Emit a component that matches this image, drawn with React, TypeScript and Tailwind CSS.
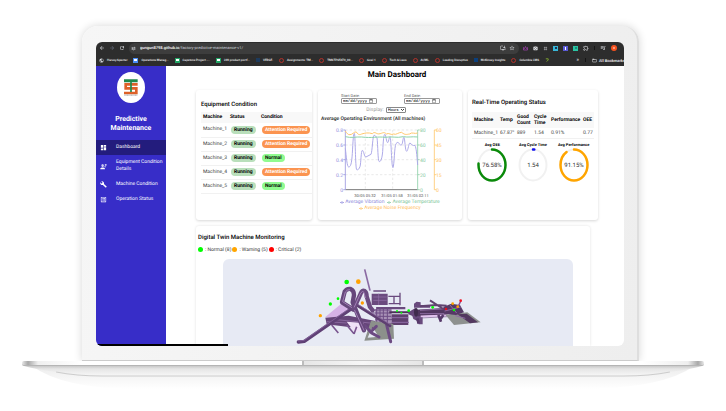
import type { ReactNode } from "react";
import {
  MdBuild,
  MdDashboard,
  MdEngineering,
  MdListAlt,
  MdArrowBack,
  MdArrowForward,
  MdRefresh,
  MdTune,
  MdStarBorder,
  MdInstallDesktop,
  MdPhotoCamera,
  MdTag,
  MdOutlineExtension,
  MdQueueMusic,
  MdMoreVert,
  MdPublic,
  MdFolderOpen,
} from "react-icons/md";

const bookmarks: { label: string; icon: ReactNode }[] = [
  { label: "Harvey Specter", icon: <MdPublic className="size-[5px] text-gray-200" /> },
  { label: "Operations Manag...", icon: <Square className="bg-[#4a8cf5]" /> },
  { label: "Capstone Project -...", icon: <Square className="bg-[#22a565]" /> },
  { label: "249 product portf...", icon: <Square className="bg-[#22a565]" /> },
  { label: "VERGE.", icon: <span className="size-1 bg-[#1d3a5c]" /> },
  { label: "Assignments: TM...", icon: <Ring /> },
  { label: "TMSTPS5470_00...", icon: <Ring /> },
  { label: "Goal 1", icon: <Ring /> },
  { label: "Tech & Laws", icon: <Ring /> },
  { label: "AI/ML", icon: <Ring /> },
  { label: "Leading Disruptive", icon: <Ring /> },
  { label: "McKinsey Insights", icon: <span className="size-1 bg-[#0b3f7c]" /> },
  { label: "Columbia LMS", icon: <Ring /> },
];

function Square({ className }: { className: string }) {
  return (
    <span className={`flex size-[5px] items-center justify-center ${className}`}>
      <span className="h-[2px] w-[3px] bg-white" />
    </span>
  );
}

function Ring() {
  return <span className="size-[5px] rounded-full border border-[#b3322b]" />;
}

function BrowserBar() {
  return (
    <header className="overflow-hidden bg-[#2d2d2d] text-gray-200">
      <div className="flex h-3 items-center gap-1">
        <nav className="flex shrink-0 items-center gap-1 pl-[3px]">
          <button aria-label="Back"><MdArrowBack className="size-[6px]" /></button>
          <button aria-label="Forward" className="text-gray-500"><MdArrowForward className="size-[6px]" /></button>
          <button aria-label="Reload"><MdRefresh className="size-[6px]" /></button>
        </nav>
        <div className="flex h-[11px] min-w-0 flex-1 items-center rounded-full bg-[#3d3d3d] pr-1 pl-[2px]">
          <MdTune className="mr-1 size-[5px] shrink-0" />
          <p className="flex-1 truncate text-[4px] leading-[6px] font-medium text-white">
            gungun8798.github.io<span className="font-normal text-gray-300">/factory-predictive-maintenance-v1/</span>
          </p>
          <button aria-label="Install" className="mr-[3px]"><MdInstallDesktop className="size-[6px]" /></button>
          <button aria-label="Bookmark"><MdStarBorder className="size-[6px]" /></button>
        </div>
        <div className="flex shrink-0 items-center gap-[5px]">
          <svg viewBox="0 0 10 10" className="size-[5px]" fill="none" stroke="#9b3fa8" strokeWidth="1.6">
            <path d="M1 8V3l2 2 2-4 2 4 2-2v5z" />
          </svg>
          <MdPhotoCamera className="size-[5px]" />
          <MdTag className="size-[5px]" />
          <span className="flex size-[5px] items-center justify-center bg-[#39b7d8]"><span className="size-[2px] bg-[#1c3550]" /></span>
          <span className="flex size-[5px] items-center justify-center bg-[#5b5bd6]"><span className="h-[3px] w-px bg-white" /></span>
          <span className="flex size-[5px] items-center justify-center bg-[#2bc4a4]"><span className="size-[2px] bg-[#178f77]" /></span>
          <MdOutlineExtension className="size-[6px]" />
          <span className="h-1 w-px bg-[#151515]" />
          <MdQueueMusic className="size-[6px]" />
          <span className="flex size-[6px] items-center justify-center rounded-full bg-[#f4511e]"><span className="size-[2px] rounded-full bg-[#ffb199]" /></span>
          <MdMoreVert className="-mr-1 size-[6px]" />
        </div>
      </div>
      <nav className="flex h-3 items-center gap-[6px] pl-[3px] text-[3px] leading-[5px] font-medium whitespace-nowrap text-gray-100">
        {bookmarks.map((b) => (
          <a key={b.label} href="#" className="flex shrink-0 items-center gap-[3px]">
            {b.icon}
            {b.label}
          </a>
        ))}
        <svg viewBox="0 0 10 10" className="size-1 shrink-0" fill="none" stroke="#8bb92f" strokeWidth="2">
          <path d="M2 2h6v3L4 9" />
        </svg>
        <span className="ml-auto text-[5px]">»</span>
        <span className="h-1 w-px shrink-0 bg-[#151515]" />
        <a href="#" className="-mr-px flex shrink-0 items-center gap-[2px]">
          <MdFolderOpen className="size-[5px]" />
          <span className="text-[4px]">All Bookmarks</span>
        </a>
      </nav>
    </header>
  );
}

const menu = [
  { label: "Dashboard", Icon: MdDashboard, active: true },
  { label: "Equipment Condition Details", Icon: MdEngineering, active: false },
  { label: "Machine Condition", Icon: MdBuild, active: false },
  { label: "Operation Status", Icon: MdListAlt, active: false },
];

function Sidebar() {
  return (
    <aside className="w-[70px] shrink-0 bg-[#372dc8] pt-[6px] text-white">
      <svg viewBox="0 0 84 93" className="mx-auto h-[31px] w-7" aria-label="TS logo">
        <ellipse cx="42" cy="46.500" rx="42" ry="46.500" fill="#fff" />
        <g fill="none" strokeWidth="8">
          <path d="M62 37H26v12h32v14H21" stroke="#dd6128" />
          <path d="M21 26h41" stroke="#1f8a4c" strokeWidth="9" />
          <path d="M42 30v30" stroke="#1f8a4c" strokeWidth="5" />
        </g>
        <path d="M22 69.500h40" stroke="#777" strokeWidth="2" strokeDasharray="3 1" />
      </svg>
      <h1 className="mt-3 text-center text-[7px] leading-[9px] font-bold">
        Predictive
        <br />
        Maintenance
      </h1>
      <nav className="mt-[7px] flex flex-col text-[5px] leading-[7px]">
        {menu.map(({ label, Icon, active }) => (
          <a
            key={label}
            href="#"
            className={`flex items-center gap-[9px] py-1 pl-1 ${active ? "bg-[#231c7d]" : ""}`}
          >
            <Icon className="size-[7px] shrink-0" />
            <span>{label}</span>
          </a>
        ))}
      </nav>
    </aside>
  );
}

const card = "rounded-[3px] bg-white shadow-[0_1px_3px_rgba(0,0,0,0.16)]";

const machines = [
  { name: "Machine_1", ok: false },
  { name: "Machine_2", ok: false },
  { name: "Machine_3", ok: true },
  { name: "Machine_4", ok: false },
  { name: "Machine_5", ok: true },
];

function EquipmentCondition() {
  return (
    <section className={`${card} pt-[11px] pb-[26px] pl-[5px]`}>
      <h3 className="mb-[3px] text-[6px] leading-2 font-medium">Equipment Condition</h3>
      <table className="w-full table-fixed text-left text-[5px] leading-[7px]">
        <thead>
          <tr className="h-[11px] bg-[#f8f8f8]">
            <th className="w-[27px] pl-[2px] font-bold">Machine</th>
            <th className="w-[30px] pl-[2px] font-bold">Status</th>
            <th className="pl-[3px] font-bold">Condition</th>
          </tr>
        </thead>
        <tbody>
          {machines.map((m) => (
            <tr key={m.name} className="h-[14px] border-b border-[#f1f1f1]">
              <td className="pl-[2px] text-[#444]">{m.name}</td>
              <td className="pl-[3px]">
                <span className="inline-block rounded-full bg-[#b9dfbb] px-[3px] leading-2 font-bold">Running</span>
              </td>
              <td className="pl-1">
                <span
                  className={`inline-block rounded-full px-[3px] leading-2 font-bold ${m.ok ? "bg-[#90fb90] text-black" : "bg-[#fb9450] text-white"}`}
                >
                  {m.ok ? "Normal" : "Attention Required"}
                </span>
              </td>
            </tr>
          ))}
        </tbody>
      </table>
    </section>
  );
}

const leftTicks = ["0.8", "0.6", "0.4", "0.2", "0"];
const midTicks = ["80", "60", "40", "20", "0"];
const rightTicks = ["60", "45", "30", "15", "0"];

function EnvironmentChart() {
  return (
    <svg viewBox="0 0 144 70" className="w-full text-[5px]" aria-label="Average operating environment">
      <g transform="scale(0.33333) translate(-9 -126)" fill="none">
        <g stroke="#dedede" strokeDasharray="7 6" strokeWidth="2">
          <path d="M91 135H308M91 180H308M91 224H308M91 269H308M151 135V314M233 135V314" />
        </g>
        <path d="M91 314H308" stroke="#777" strokeWidth="3" />
        <path d="M85 135h6M85 180h6M85 224h6M85 269h6M85 314h6M91 135V314" stroke="#9b97e0" strokeWidth="2.500" />
        <path d="M308 135V314M308 135h6M308 180h6M308 224h6M308 269h6M308 314h6" stroke="#8dcfa7" strokeWidth="2.500" />
        <path d="M358 135V314M358 135h6M358 180h6M358 224h6M358 269h6M358 314h6" stroke="#ffc870" strokeWidth="2.500" />
        <path
          d="M91 190C94 215 96 246 101 246C107 246 110 236 112 205C114 170 115 145 118 145C121 145 121 252 125 254C129 256 132 252 135 245C138 235 138 197 142 196C146 196 148 217 153 216C158 213 163 211 168 208C172 200 173 152 177 151C181 150 183 156 186 158C189 180 188 229 193 230C198 230 201 220 203 200C205 165 206 148 210 148C213 150 214 172 218 173C221 173 222 155 225 155C229 160 229 247 234 248C238 240 238 185 243 176C248 170 250 172 252 175C255 180 258 182 261 178C264 170 264 157 267 157C270 160 270 198 275 199C280 196 281 173 285 174C290 178 294 184 300 181C304 190 305 205 308 240"
          stroke="#aeaae8"
          strokeWidth="3"
        />
        <path d="M91 155C110 160 120 155 140 156C170 160 190 154 210 157C230 153 245 160 265 155C280 158 290 154 308 156" stroke="#8dd2a9" strokeWidth="3" />
        <path
          d="M91 138C96 145 99 150 105 149C112 150 118 138 124 141C130 150 133 150 140 147C150 144 160 142 172 146C180 137 185 150 195 146C202 145 207 139 214 147C222 142 228 152 236 147C243 151 250 142 260 142C270 151 275 148 284 147C290 140 300 148 308 144"
          stroke="#ffc76b"
          strokeWidth="3"
        />
      </g>
      {leftTicks.map((t, i) => (
        <text key={t} x="25" y={5 + i * 15} textAnchor="end" fill="#8f8bdc">{t}</text>
      ))}
      {midTicks.map((t, i) => (
        <text key={t} x="102" y={5 + i * 15} fill="#7fc79c">{t}</text>
      ))}
      {rightTicks.map((t, i) => (
        <text key={t} x="118" y={5 + i * 15} fill="#ffc060">{t}</text>
      ))}
      <g fill="#555" textAnchor="middle" className="text-[4px]">
        <text x="47" y="70">30/05 05:32</text>
        <text x="74" y="70">31/05 01:58</text>
        <text x="100" y="70">31/05 02:11</text>
      </g>
    </svg>
  );
}

function LegendItem({ label, className }: { label: string; className: string }) {
  return (
    <li className={`flex items-center gap-px ${className}`}>
      <svg viewBox="0 0 12 8" className="h-[3px] w-1" fill="none" stroke="currentColor" strokeWidth="2">
        <path d="M0 4h12" />
        <circle cx="6" cy="4" r="2.500" fill="#fff" />
      </svg>
      {label}
    </li>
  );
}

function DateField({ id, label }: { id: string; label: string }) {
  return (
    <div className="flex flex-col items-start">
      <label htmlFor={id} className="text-[4px] leading-[5px] text-[#555]">{label}</label>
      <input
        id={id}
        type="date"
        className="h-[6px] w-9 rounded-[1px] border border-[#999] px-px font-['Liberation_Mono',monospace] text-[4px] leading-1 text-black [&::-webkit-calendar-picker-indicator]:m-0 [&::-webkit-datetime-edit-day-field]:p-0 [&::-webkit-datetime-edit-month-field]:p-0 [&::-webkit-datetime-edit-year-field]:p-0 [&::-webkit-datetime-edit]:p-0"
      />
    </div>
  );
}

function OperatingEnvironment() {
  return (
    <section className={`${card} flex flex-col pt-[3px]`}>
      <div className="flex justify-between pr-[22px] pl-[23px]">
        <DateField id="start" label="Start Date:" />
        <DateField id="end" label="End Date:" />
      </div>
      <div className="mt-[3px] flex items-center justify-center gap-[2px] pr-2 text-[5px] leading-[6px]">
        <label htmlFor="display" className="text-[#999]">Display:</label>
        <span className="relative">
          <select
            id="display"
            className="block h-[6px] w-5 appearance-none rounded-[1px] border border-[#888] px-px text-[4px] leading-1 text-black"
          >
            <option>Hours</option>
          </select>
          <svg viewBox="0 0 6 4" className="pointer-events-none absolute top-[2px] right-[2px] h-[2px] w-[3px]" fill="none" stroke="#000" strokeWidth="1.500">
            <path d="M0 0l3 3 3-3" />
          </svg>
        </span>
      </div>
      <h3 className="mt-[3px] mb-1 pl-[3px] text-[5px] leading-[7px] font-medium text-[#222]">
        Average Operating Environment (All machines)
      </h3>
      <EnvironmentChart />
      <ul className="mt-[2px] flex flex-wrap justify-center gap-x-[3px] px-2 text-[5px] leading-[6px]">
        <LegendItem label="Average Vibration" className="text-[#8f8bdc]" />
        <LegendItem label="Average Temperature" className="text-[#7fc79c]" />
        <LegendItem label="Average Noise Frequency" className="text-[#ffc060]" />
      </ul>
    </section>
  );
}

const gauges = [
  { label: "Avg OEE", value: "76.58%", color: "#0a8a0a", share: 76.58 },
  { label: "Avg Cycle Time", value: "1.54", color: "#1010f0", share: 1.54 },
  { label: "Avg Performance", value: "91.15%", color: "#ffa500", share: 91.15 },
];

function OperatingStatus() {
  return (
    <section className={`${card} px-1 pt-[9px]`}>
      <h3 className="mb-[5px] text-[6px] leading-2 font-medium">Real-Time Operating Status</h3>
      <table className="w-full table-fixed text-left text-[5px] leading-[6px]">
        <thead>
          <tr className="h-4 bg-[#f8f8f8]">
            <th className="w-[26px] pl-[2px] font-bold">Machine</th>
            <th className="w-[17px] pl-[2px] font-bold">Temp</th>
            <th className="w-[17px] pl-[2px] font-bold">Good<br />Count</th>
            <th className="w-[17px] pl-[2px] font-bold">Cycle<br />Time</th>
            <th className="w-8 pl-[2px] font-bold">Performance</th>
            <th className="pl-[2px] font-bold">OEE</th>
          </tr>
        </thead>
        <tbody>
          <tr className="h-[10px] border-b border-[#f1f1f1] text-[#444]">
            <td className="pl-[2px]">Machine_1</td>
            <td className="pl-[2px]">67.87°</td>
            <td className="pl-[2px]">889</td>
            <td className="pl-[2px]">1.54</td>
            <td className="pl-[2px]">0.91%</td>
            <td className="pl-[2px]">0.77</td>
          </tr>
        </tbody>
      </table>
      <div className="mt-[3px] grid grid-cols-3">
        {gauges.map((g) => (
          <figure key={g.label} className="flex flex-col items-center">
            <figcaption className="text-[4px] leading-[5px] font-bold whitespace-nowrap">{g.label}</figcaption>
            <svg viewBox="0 0 30 34" className="mt-px h-[34px] w-[30px] text-[6px]">
              <ellipse cx="15" cy="17" rx="13.500" ry="15.500" fill="none" stroke="#f1f1f1" strokeWidth="2" />
              <path
                d="M15 1.500A13.500 15.500 0 0 1 15 32.500A13.500 15.500 0 0 1 15 1.500"
                pathLength="100"
                strokeDasharray={`${g.share} 100`}
                fill="none"
                stroke={g.color}
                strokeWidth="2.500"
                strokeLinecap="round"
              />
              <text x="15" y="19" textAnchor="middle" fill="#333">{g.value}</text>
            </svg>
          </figure>
        ))}
      </div>
    </section>
  );
}

const dots: [number, number, number, string][] = [
  [470, 171, 7, "#0f0"], [505, 170, 7, "#ffa200"], [421, 237, 5, "#0f0"], [444, 221, 4, "#0f0"],
  [391, 272, 5, "#ffa200"], [517, 234, 5, "#ff9d00"], [621, 258, 3, "#0f0"], [634, 263, 3, "#0f0"],
  [656, 257, 4, "#0f0"], [728, 247, 4, "#0f0"], [768, 252, 4, "#e01020"], [792, 255, 4, "#0f0"],
  [788, 236, 4, "#ffa200"], [803, 245, 4, "#ff9d00"], [812, 227, 4, "#f01020"],
];

function MachineModel() {
  return (
    <svg viewBox="99 102 1050 261" className="block w-full" aria-label="Machine model">
      <path d="M524 133l16 64" stroke="#8b6aa3" strokeWidth="5" />
      {/* feeder body */}
      <path d="M405 277l48-40 22 14-30 27z" fill="#d5b2e6" />
      <path d="M406 278l70-6 92 18-12 22-80-6-66-8z" fill="#664579" />
      <path d="M470 290l50 4 4 22-30 6z" fill="#f0e2f7" />
      <path d="M425 300l20 24M470 300l22 26M500 305l-8 22" stroke="#7a5690" strokeWidth="5" />
      <path d="M410 290l60 4M440 284l100 10" stroke="#9c7ab0" strokeWidth="2" />
      {/* tower frame */}
      <path d="M545 206h48v34h-48zM560 246h86v7h-86z" fill="#6a4a7e" />
      <path d="M550 198h38M595 214h34M630 203v38M596 236h34M612 214v24" stroke="#6a4a7e" strokeWidth="4" fill="none" />
      <path d="M550 216h40M550 226h40M566 206v34" stroke="#9674aa" strokeWidth="2" />
      <path d="M555 252h50v50h-50z" fill="#a891b6" />
      <path d="M548 255h56M548 264h56M552 274h52M556 284h50M556 296h50M560 246v58M570 246v58M580 246v58M592 246v58" stroke="#6d4c84" strokeWidth="3" />
      <path d="M605 268h50v32h-50z" fill="#60406f" />
      <path d="M605 278h50M605 292h52" stroke="#8f6ca5" strokeWidth="3" />
      <path d="M598 262h62" stroke="#4b3158" strokeWidth="6" />
      {/* ground panel */}
      <path fillRule="evenodd" d="M523 347l20-60 67 10 2 44zM533 338l33-3-19-30z" fill="#8c908b" />
      <path d="M525 302l20 22 22 12M545 318l14-14M590 300l12 50" fill="none" stroke="#6c4a82" strokeWidth="9" strokeLinecap="round" />
      {/* large pipes */}
      <g fill="none" strokeLinecap="round" strokeLinejoin="round">
        <path d="M325 351l18-2L486 250" stroke="#5f4075" strokeWidth="10" />
        <path d="M325 348l17-2L482 248" stroke="#9370aa" strokeWidth="2" />
        <path d="M500 240l100 62" stroke="#5d3f70" strokeWidth="9" />
        <path d="M505 239l95 59" stroke="#9773ac" strokeWidth="2" />
        <path d="M490 254l-34-22 8-32q6-10 18-8 10 4 10 18l-4 22 34 84" stroke="#66477b" strokeWidth="13" />
        <path d="M486 248l-28-18 8-29q5-8 13-7" stroke="#a17fb5" strokeWidth="3" />
        <path d="M492 250l20-44q4-12 12-8 6 4 6 16l10 32 8 10" stroke="#6b4b80" strokeWidth="13" />
        <path d="M493 246l19-42q6-8 10-2l4 16M494 256l28 60" stroke="#a17fb5" strokeWidth="3" />
      </g>
      {/* coupling and conveyor */}
      <path d="M655 262l20-12v26l-20-8z" fill="#644578" />
      <path d="M672 236l8-6 12 2v8h28v8h-48zM664 264h34v34h-12l-4-10-12-6z" fill="#694a7d" />
      <path d="M678 254l94-6v22l-94 4z" fill="#513660" />
      <path d="M690 256l80-5M690 266h80" stroke="#8c6ba0" strokeWidth="3" />
      <path d="M692 274l80-3" stroke="#e3c3f0" strokeWidth="5" />
      <path d="M692 279l80-4" stroke="#7c5a91" strokeWidth="2" />
      <path d="M720 226l40 26M690 244l50-4 30 2" stroke="#60426f" strokeWidth="6" fill="none" />
      <path d="M745 270l8 20M760 270l-10 14M682 280l4 16" stroke="#57396a" strokeWidth="8" />
      <path d="M672 262a6 13 0 1 0 12 0a6 13 0 1 0-12 0" fill="#3f2a4c" />
      <path d="M766 269l66-7 40 30-80 8z" fill="#8e918f" />
      <path d="M802 268l28-2 34 26-24 3z" fill="#53385f" />
      <path d="M760 246l24-10 26 4 12 22-24 8-36-4z" fill="#553965" />
      <path d="M764 258l48-12M780 240l20 24M796 272l30 8" stroke="#8e6ba3" strokeWidth="3" />
      <path d="M804 245l8-16" stroke="#8a5090" strokeWidth="4" />
      {dots.map(([x, y, r, fill]) => (
        <circle key={`${x}-${y}`} cx={x} cy={y} r={r} fill={fill} />
      ))}
    </svg>
  );
}

const statuses = [
  { label: ": Normal (8)", className: "bg-[#00ff00]" },
  { label: ": Warning (5)", className: "bg-[#ffa500]" },
  { label: ": Critical (2)", className: "bg-[#ff0000]" },
];

function DigitalTwin() {
  return (
    <section className="mt-[6px] mr-2 rounded-t-[3px] bg-white pt-2 pr-[17px] shadow-[0_0_3px_rgba(0,0,0,0.12)]">
      <h3 className="pl-[2px] text-[6px] leading-2 font-medium">Digital Twin Machine Monitoring</h3>
      <ul className="mt-1 flex gap-px pl-[2px] text-[5px] leading-2 text-[#333]">
        {statuses.map((s) => (
          <li key={s.label} className="flex items-center gap-[2px]">
            <span className={`size-[5px] rounded-full ${s.className}`} />
            {s.label}
          </li>
        ))}
      </ul>
      <div className="mt-[5px] ml-[27px] overflow-hidden rounded-t-[6px] bg-[#e7eaf4]">
        <MachineModel />
      </div>
    </section>
  );
}

function LaptopBase() {
  return (
    <div className="mx-[22px]">
      <div className="flex h-[5px] justify-center rounded-l-[2px] rounded-r-[2px] border-b border-[#b5b5b5] bg-[linear-gradient(to_right,#e8e8e8,#a8a8a8_6px,#f0f0f0_16px,#ffffff_60px,#ffffff_620px,#eeeeee_calc(100%-16px),#a8a8a8_calc(100%-6px),#e8e8e8)]">
        <div className="w-[18%] border-x-2 border-[#bdbdbd] bg-[linear-gradient(to_right,#e6e6e6,#f7f7f7_50%,#e6e6e6)]" />
      </div>
      <svg viewBox="0 0 680 24" preserveAspectRatio="none" className="block h-6 w-full">
        <defs>
          <linearGradient id="base" x1="0" y1="0" x2="0" y2="1">
            <stop offset="0" stopColor="#c9c9c9" />
            <stop offset="0.300" stopColor="#e6e6e6" />
            <stop offset="1" stopColor="#f7f7f7" />
          </linearGradient>
          <linearGradient id="cast" x1="0" y1="0" x2="0" y2="1">
            <stop offset="0" stopColor="#ececec" />
            <stop offset="1" stopColor="#ffffff" />
          </linearGradient>
        </defs>
        <path d="M10 0H670Q640 22 560 23H110Q40 22 10 0z" fill="url(#cast)" />
        <path d="M2 0H678Q668 3 646 6Q626 10 600 10H80Q54 10 34 6Q12 3 2 0z" fill="url(#base)" />
        <path d="M34 6Q54 10 80 10H600Q626 10 646 6" fill="none" stroke="#cccccc" />
      </svg>
    </div>
  );
}

export default function App() {
  return (
    <div className="bg-white pt-[26px] font-[Roboto,'Liberation_Sans',sans-serif] text-black [text-rendering:geometricPrecision]">
      <div className="mr-[87px] ml-[82px] rounded-t-[16px] border-r-2 border-b border-r-[#dedede] border-b-[#cccccc] bg-[linear-gradient(100deg,#f6f6f6,#eeeeee)] pt-4 pr-[13px] pb-[14px] pl-[14px] shadow-[0_0_8px_rgba(0,0,0,0.16)]">
        <div className="relative overflow-hidden rounded-[6px] bg-white">
          <BrowserBar />
          <div className="flex">
            <Sidebar />
            <main className="min-w-0 flex-1 pt-1 pr-[26px] pl-[30px]">
              <h2 className="mb-[10px] text-center text-[8px] leading-[10px] font-bold">Main Dashboard</h2>
              <div className="grid grid-cols-[116fr_144fr_130fr] gap-[6px]">
                <EquipmentCondition />
                <OperatingEnvironment />
                <OperatingStatus />
              </div>
              <DigitalTwin />
            </main>
          </div>
          <div className="absolute bottom-0 left-0 h-[2px] w-1/4 bg-black" />
        </div>
      </div>
      <LaptopBase />
    </div>
  );
}
